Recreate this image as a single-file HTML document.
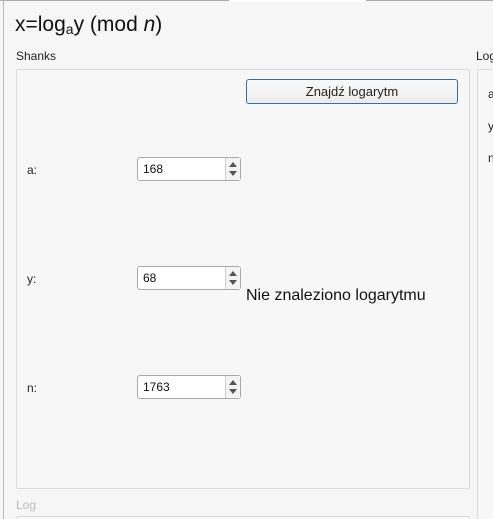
<!DOCTYPE html>
<html><head><style>
*{margin:0;padding:0;box-sizing:border-box}
html,body{width:493px;height:519px;overflow:hidden}
body{background:#f6f6f6;position:relative;font-family:"Liberation Sans",sans-serif;font-size:12px;color:#222}
.a{position:absolute}
.grp{position:absolute;border:1px solid #dcdcdc;border-radius:2px;background:#f7f7f7}
.spin{position:absolute;width:104px;height:24px;background:#fff;border:1px solid #aaa;border-radius:3px}
.spin span{position:absolute;left:5px;top:4px;font-size:12px;color:#111}
.spin i{position:absolute;right:0;top:0;width:15px;height:22px;border-left:1px solid #ccc;background:#f4f4f4}
.spin i:before{content:"";position:absolute;left:3px;top:4px;border:4px solid transparent;border-bottom:5px solid #555;border-top:0}
.spin i:after{content:"";position:absolute;left:3px;top:13px;border:4px solid transparent;border-top:5px solid #555;border-bottom:0}
.lbl{position:absolute;font-size:12px}
</style></head><body>
<div class="a" style="left:0;top:0;width:229px;height:1px;background:#aaa"></div>
<div class="a" style="left:366px;top:0;width:127px;height:1px;background:#aaa"></div>
<div class="a" style="left:229px;top:0;width:137px;height:2px;background:#fff"></div>
<div class="a" style="left:3px;top:0;width:1px;height:519px;background:#bbb"></div>
<div class="a" style="left:15px;top:13px;font-size:21px;color:#111;white-space:nowrap">x=log<sub style="font-size:14px;vertical-align:-3px">a</sub>y (mod <i>n</i>)</div>
<div class="a" style="left:16px;top:49px;font-size:12px">Shanks</div>
<div class="a" style="left:476px;top:49px;font-size:12px">Log</div>
<div class="grp" style="left:16px;top:69px;width:454px;height:420px"></div>
<div class="grp" style="left:477px;top:69px;width:30px;height:460px"></div>
<div class="a" style="left:246px;top:79px;width:212px;height:25px;border:1px solid #3c6e99;border-radius:3px;background:linear-gradient(#fafafa,#ececec);text-align:center;line-height:23px;font-size:13px">Znajdź logarytm</div>
<div class="lbl" style="left:27px;top:163px">a:</div>
<div class="lbl" style="left:27px;top:272px">y:</div>
<div class="lbl" style="left:27px;top:381px">n:</div>
<div class="spin" style="left:137px;top:157px"><span>168</span><i></i></div>
<div class="spin" style="left:137px;top:266px"><span>68</span><i></i></div>
<div class="spin" style="left:137px;top:375px"><span>1763</span><i></i></div>
<div class="a" style="left:246px;top:287px;font-size:16px;color:#111">Nie znaleziono logarytmu</div>
<div class="lbl" style="left:488px;top:87px">a</div>
<div class="lbl" style="left:488px;top:119px">y</div>
<div class="lbl" style="left:488px;top:151px">n</div>
<div class="a" style="left:16px;top:498px;font-size:12px;color:#bbb">Log</div>
<div class="grp" style="left:16px;top:516px;width:454px;height:10px"></div>
</body></html>
